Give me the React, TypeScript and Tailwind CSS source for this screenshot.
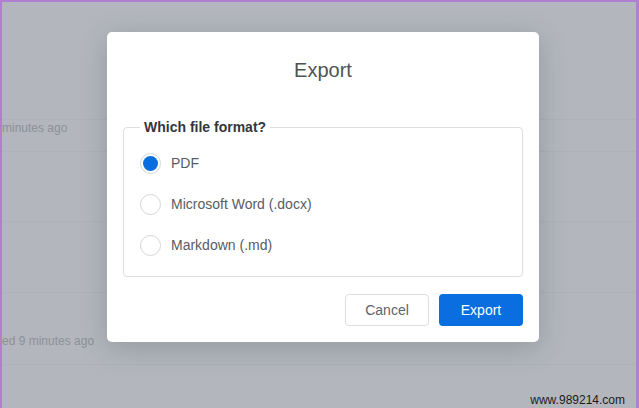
import React from 'react';

const formats = [
  { id: 'pdf', label: 'PDF' },
  { id: 'docx', label: 'Microsoft Word (.docx)' },
  { id: 'md', label: 'Markdown (.md)' },
];

function Radio({ checked }: { checked: boolean }) {
  return (
    <span className="flex h-[21px] w-[21px] shrink-0 items-center justify-center rounded-full border border-[#d3d6db] bg-white">
      {checked && <span className="h-[15px] w-[15px] rounded-full bg-[#0a6ee0]" />}
    </span>
  );
}

export default function App() {
  const selected = 'pdf';

  return (
    <div
      className="relative h-[408px] w-[639px] overflow-hidden border-l-2 border-r-[3px] border-t-2 border-[#b07fcf] bg-[#b3b7bd]"
      style={{ fontFamily: '"Liberation Sans", Arial, sans-serif' }}
    >
      {/* list behind the overlay, only the visible part of each row's text */}
      <div className="flex flex-col text-[12px] leading-[14px] text-[#8c9097]">
        <div className="h-[118px] border-b border-[#adb1b8]" />
        <div className="h-[32px] border-b border-[#adb1b8] pt-[1px]">
          <div className="whitespace-nowrap">minutes ago</div>
        </div>
        <div className="h-[70px] border-b border-[#adb1b8]" />
        <div className="h-[71px] border-b border-[#adb1b8]" />
        <div className="h-[72px] border-b border-[#adb1b8] pt-[41px]">
          <div className="whitespace-nowrap">ed 9 minutes ago</div>
        </div>
      </div>

      {/* export dialog */}
      <div className="absolute left-[105px] top-[30px] flex w-[432px] flex-col rounded-[5px] bg-white px-4 pb-4 pt-[26px] shadow-[0_6px_28px_rgba(40,45,55,0.22)]">
        <h2 className="text-center text-[20px] leading-6 text-[#4f5358]">Export</h2>

        <fieldset className="mt-[37px] rounded-[4px] border border-[#dcdee2] px-4 pb-[10px]">
          <legend className="px-1 text-[14px] font-bold leading-[17px] text-[#33363a]">Which file format?</legend>
          <div className="flex flex-col pt-[7px]">
            {formats.map((f) => (
              <label key={f.id} className="flex h-[41px] items-center gap-[10px]">
                <Radio checked={f.id === selected} />
                <span className="text-[14px] text-[#585c62]">{f.label}</span>
              </label>
            ))}
          </div>
        </fieldset>

        <div className="mt-[17px] flex justify-end gap-[10px]">
          <button className="h-8 w-[84px] rounded-[4px] border border-[#dcdee2] bg-white text-[14px] text-[#60646a]">
            Cancel
          </button>
          <button className="h-8 w-[84px] rounded-[4px] bg-[#0a6ee0] text-[14px] text-white">
            Export
          </button>
        </div>
      </div>

      <div className="absolute right-[11px] top-[391px] text-[12px] leading-[14px] text-[#1a1a1a]">www.989214.com</div>
    </div>
  );
}
